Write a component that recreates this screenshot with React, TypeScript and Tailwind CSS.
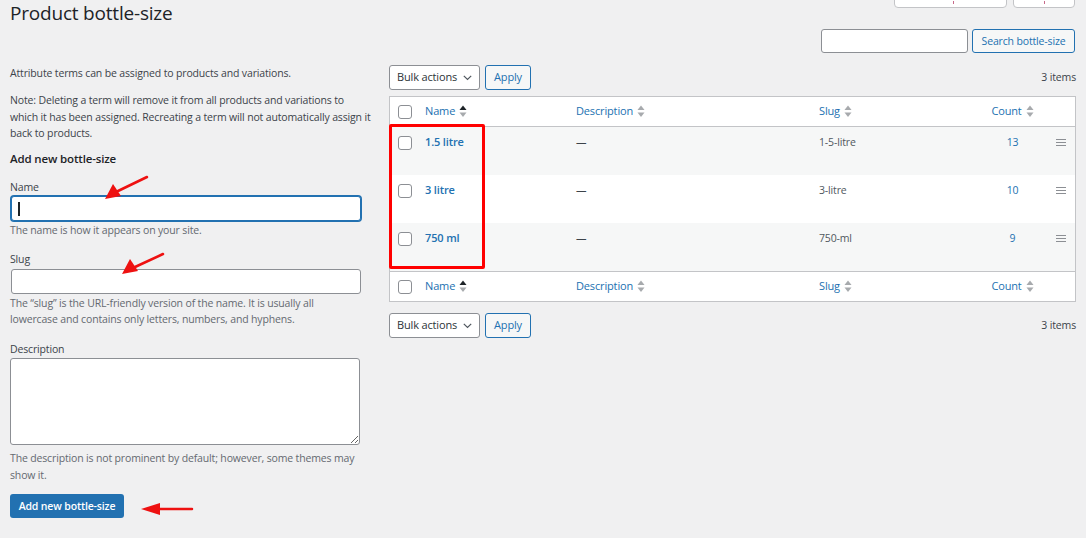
import React from "react";

const SortArrows = ({ active = false }: { active?: boolean }) => (
  <svg width="8" height="13" viewBox="0 0 8 13" className="ml-[4px] inline-block">
    <polygon points="4,0.5 7.5,5 0.5,5" fill={active ? "#1d2327" : "#a7aaad"} />
    <polygon points="0.5,7.5 7.5,7.5 4,12" fill="#a7aaad" />
  </svg>
);

const Checkbox = () => (
  <div className="w-[14px] h-[14px] rounded-[3px] border border-[#8c8f94] bg-white" />
);

const Handle = () => (
  <div className="flex flex-col gap-[2px] w-[10px]">
    <div className="h-[1px] bg-[#8c8f94]" />
    <div className="h-[1px] bg-[#8c8f94]" />
    <div className="h-[1px] bg-[#8c8f94]" />
  </div>
);

const cols = "grid grid-cols-[35px_151px_243px_152px_85px_1fr]";

const HeadRow = ({ top }: { top: boolean }) => (
  <div
    className={`${cols} h-[30px] items-center bg-white ${top ? "border-b" : "border-t"} border-[#c3c4c7]`}
  >
    <div className="pl-[8px] flex items-center">
      <Checkbox />
    </div>
    <div className="flex items-center text-[#2271b1] text-[11px]">
      Name
      <SortArrows active />
    </div>
    <div className="flex items-center text-[#2271b1] text-[11px]">
      Description
      <SortArrows />
    </div>
    <div className="flex items-center text-[#2271b1] text-[11px]">
      Slug
      <SortArrows />
    </div>
    <div className="flex items-center justify-center text-[#2271b1] text-[11px] pr-[2px]">
      Count
      <SortArrows />
    </div>
    <div />
  </div>
);

const rows = [
  { name: "1.5 litre", slug: "1-5-litre", count: "13", alt: true },
  { name: "3 litre", slug: "3-litre", count: "10", alt: false },
  { name: "750 ml", slug: "750-ml", count: "9", alt: true },
];

const Toolbar = () => (
  <div className="flex items-center h-[25px]">
    <div className="flex items-center justify-between w-[91px] h-[25px] bg-white border border-[#8c8f94] rounded-[3px] pl-[7px] pr-[7px] text-[#2c3338] text-[11px] whitespace-nowrap">
      <span>Bulk actions</span>
      <svg width="9" height="6" viewBox="0 0 9 6">
        <polyline points="0.8,0.8 4.5,4.5 8.2,0.8" fill="none" stroke="#50575e" strokeWidth="1.2" />
      </svg>
    </div>
    <div className="ml-[5px] w-[46px] h-[25px] flex items-center justify-center border border-[#2271b1] rounded-[3px] bg-[#f6f7f7] text-[#2271b1] text-[11px]">
      Apply
    </div>
    <div className="ml-auto text-[#3c434a]">3 items</div>
  </div>
);

export default function App() {
  return (
    <div
      className="relative w-[1086px] h-[538px] overflow-hidden bg-[#f0f0f1] text-[10.5px] leading-[16.5px] tracking-[-0.15px] text-[#3c434a]"
      style={{ fontFamily: '"Open Sans", "Noto Sans", sans-serif' }}
    >
      {/* header */}
      <div className="flex items-start justify-between h-[24px]">
        <h1 className="pl-[10px] text-[19px] leading-[26px] tracking-[-0.2px] text-[#1d2327] font-normal">
          Product bottle-size
        </h1>
        <div className="flex gap-[6px] pr-[11px] -mt-[14px]">
          <div className="relative w-[113px] h-[22px] bg-white border border-[#c3c4c7] rounded-b-[4px]">
            <div className="absolute left-[58px] top-[14px] w-[1px] h-[3px] bg-[#c76a8a]" />
          </div>
          <div className="relative w-[62px] h-[22px] bg-white border border-[#c3c4c7] rounded-b-[4px]">
            <div className="absolute left-[30px] top-[14px] w-[1px] h-[3px] bg-[#c76a8a]" />
          </div>
        </div>
      </div>

      {/* search */}
      <div className="flex justify-end gap-[4px] pr-[11px] mt-[5px] h-[24px]">
        <div className="w-[147px] h-[24px] bg-white border border-[#8c8f94] rounded-[3px]" />
        <div className="w-[103px] h-[24px] flex items-center justify-center border border-[#2271b1] rounded-[3px] bg-[#f6f7f7] text-[#2271b1] text-[10.5px] whitespace-nowrap">
          Search bottle-size
        </div>
      </div>

      {/* columns */}
      <div className="flex mt-[12px]">
        {/* left form */}
        <div className="ml-[10px] w-[368px] flex flex-col">
          <p>Attribute terms can be assigned to products and variations.</p>
          <p className="mt-[10.5px] w-[380px] whitespace-nowrap">
            Note: Deleting a term will remove it from all products and variations to
            <br />
            which it has been assigned. Recreating a term will not automatically assign it
            <br />
            back to products.
          </p>
          <h2 className="mt-[9px] text-[11.5px] leading-[16px] font-semibold text-[#1d2327]">
            Add new bottle-size
          </h2>
          <label className="mt-[12px]">Name</label>
          <div className="ml-[1px] mt-[1px] w-[350px] h-[25px] bg-white border border-[#2271b1] rounded-[3px] shadow-[0_0_0_1px_#2271b1] flex items-center pl-[6px]">
            <span className="w-[2px] h-[14px] bg-[#1d2327]" />
          </div>
          <p className="text-[#646970] mt-[1px]">The name is how it appears on your site.</p>
          <label className="mt-[12.5px]">Slug</label>
          <div className="ml-[1px] mt-[1px] w-[350px] h-[25px] bg-white border border-[#8c8f94] rounded-[3px]" />
          <p className="text-[#646970] mt-[1px] w-[351px]">
            The “slug” is the URL-friendly version of the name. It is usually all lowercase and contains
            only letters, numbers, and hyphens.
          </p>
          <label className="mt-[13px]">Description</label>
          <textarea
            className="mt-[1px] w-[350px] h-[87px] bg-white border border-[#8c8f94] rounded-[3px] outline-none"
            readOnly
          />
          <p className="text-[#646970] mt-[5px] w-[355px]">
            The description is not prominent by default; however, some themes may show it.
          </p>
          <div className="mt-[11px] w-[114px] h-[24px] flex items-center justify-center bg-[#2271b1] rounded-[3px] text-white text-[10.5px] font-semibold">
            Add new bottle-size
          </div>
        </div>

        {/* right table */}
        <div className="ml-[11px] w-[687px] flex flex-col">
          <Toolbar />
          <div className="mt-[6px] border border-[#c3c4c7] bg-white">
            <HeadRow top />
            {rows.map((r) => (
              <div
                key={r.name}
                className={`${cols} h-[48px] items-start ${r.alt ? "bg-[#f6f7f7]" : "bg-white"}`}
              >
                <div className="pl-[8px] pt-[9px] flex">
                  <Checkbox />
                </div>
                <div className="pt-[7px] font-semibold text-[#2271b1] text-[11px]">{r.name}</div>
                <div className="pt-[7px] text-[#3c434a]">—</div>
                <div className="pt-[7px] text-[#50575e]">{r.slug}</div>
                <div className="pt-[7px] text-center text-[#2271b1] pr-[2px]">{r.count}</div>
                <div className="pt-[12px] pl-[0px] flex">
                  <Handle />
                </div>
              </div>
            ))}
            <HeadRow top={false} />
          </div>
          <div className="mt-[11px]">
            <Toolbar />
          </div>
        </div>
      </div>

      {/* red highlight rectangle */}
      <div className="absolute left-[389px] top-[124px] w-[96px] h-[145px] border-[3px] border-[#ff0000] rounded-[2px]" />

      {/* red arrows */}
      <svg className="absolute left-0 top-0 pointer-events-none" width="1086" height="538">
        <g fill="#ee1111" stroke="#ee1111" strokeLinecap="round">
          <line x1="147" y1="177" x2="118" y2="191" strokeWidth="2.5" />
          <polygon points="105,199 113,184 121,196" stroke="none" />
          <line x1="163" y1="254" x2="135" y2="267" strokeWidth="2.5" />
          <polygon points="122,274 130,259 138,271" stroke="none" />
          <line x1="192" y1="509" x2="158" y2="509" strokeWidth="2.5" />
          <polygon points="141,509 160,503 160,515" stroke="none" />
        </g>
      </svg>
    </div>
  );
}
